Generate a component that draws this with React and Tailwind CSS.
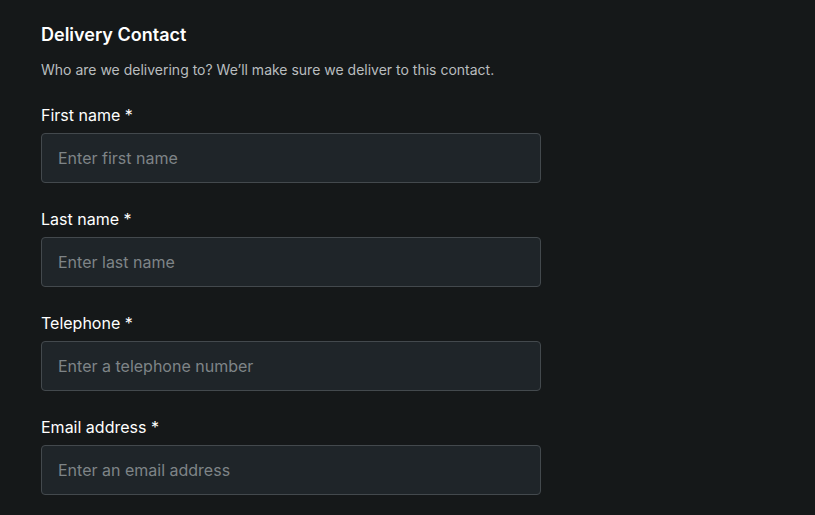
import React from 'react';

const fields = [
  { label: 'First name *', placeholder: 'Enter first name', type: 'text' },
  { label: 'Last name *', placeholder: 'Enter last name', type: 'text' },
  { label: 'Telephone *', placeholder: 'Enter a telephone number', type: 'tel' },
  { label: 'Email address *', placeholder: 'Enter an email address', type: 'email' },
];

const App = () => {
  return (
    <div className="min-h-screen bg-[#151819] font-['Inter',sans-serif] pl-[41px] pt-[23px]">
      {/* Header */}
      <h2 className="text-[18px] leading-6 font-semibold text-white">Delivery Contact</h2>
      <p className="mt-[13px] text-[14px] leading-5 text-[#b9bdbf]">
        Who are we delivering to? We’ll make sure we deliver to this contact.
      </p>

      {/* Fields */}
      <div className="mt-[25px] flex flex-col gap-[26px] w-[500px]">
        {fields.map((field) => (
          <div key={field.label} className="flex flex-col gap-2">
            <label className="text-[16px] leading-5 font-normal text-white">{field.label}</label>
            <input
              type={field.type}
              placeholder={field.placeholder}
              className="h-[50px] w-full rounded-[4px] border border-[#43494d] bg-[#1f2529] px-4 text-base text-white placeholder:text-[#7e8487] outline-none"
            />
          </div>
        ))}
      </div>
    </div>
  );
};

export default App;
